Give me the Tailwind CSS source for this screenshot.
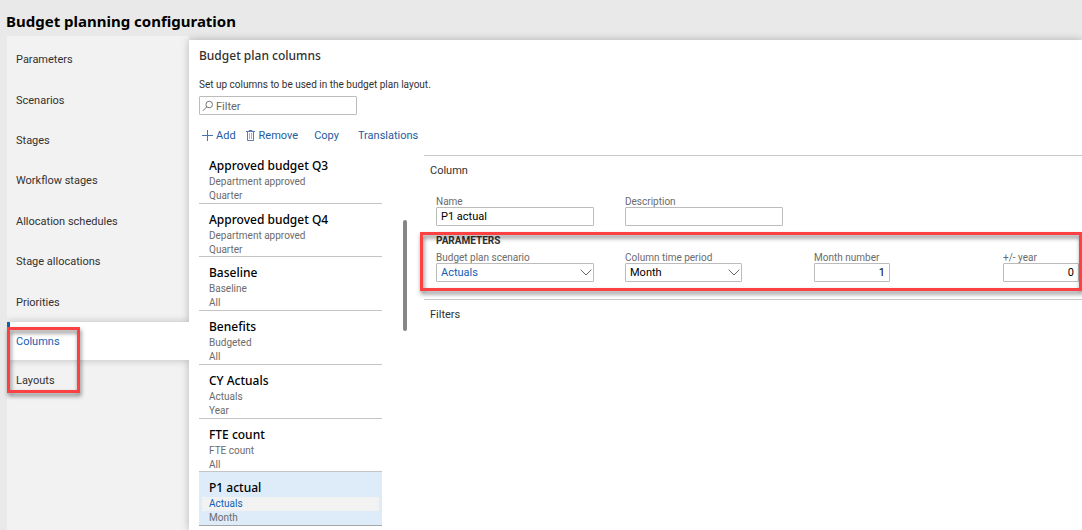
<!DOCTYPE html>
<html lang="en">
<head>
<meta charset="utf-8">
<meta name="viewport" content="width=device-width, initial-scale=1">
<title>Budget planning configuration</title>
<script src="https://cdn.jsdelivr.net/npm/@tailwindcss/browser@4"></script>
</head>
<body class="flex h-screen flex-col overflow-hidden bg-[#e9e9e9] font-['Roboto','Noto_Sans',sans-serif] text-[11px] leading-[14px] text-[#323130]">
<header class="flex h-9 shrink-0 items-center px-1.5 pt-1.5">
  <h1 class="font-['Noto_Sans',sans-serif] text-[15px] leading-5 font-bold text-black">Budget planning configuration</h1>
</header>
<div class="flex min-h-0 flex-1 pl-[7px]">
  <nav aria-label="Sections" class="flex w-[182px] shrink-0 flex-col bg-[#f2f2f2] pt-[3px]">
    <div class="flex h-[283px] flex-col">
      <a href="#" class="flex flex-1 items-center pt-0.5 pl-[9px]">Parameters</a>
      <a href="#" class="flex flex-1 items-center pt-0.5 pl-[9px]">Scenarios</a>
      <a href="#" class="flex flex-1 items-center pt-0.5 pl-[9px]">Stages</a>
      <a href="#" class="flex flex-1 items-center pt-0.5 pl-[9px]">Workflow stages</a>
      <a href="#" class="flex flex-1 items-center pt-0.5 pl-[9px]">Allocation schedules</a>
      <a href="#" class="flex flex-1 items-center pt-0.5 pl-[9px]">Stage allocations</a>
      <a href="#" class="flex flex-1 items-center pt-0.5 pl-[9px]">Priorities</a>
    </div>
    <div class="relative">
      <a href="#" aria-current="page" class="relative z-20 flex h-[38px] items-center border-l-3 border-[#0f63a8] bg-white pt-0.5 pl-1.5 text-[#1160b7] shadow-[0_0_8px_rgba(0,0,0,0.22)] [clip-path:inset(-10px_0_-10px_0)]">Columns</a>
      <a href="#" class="flex h-10 items-center pt-0.5 pl-[9px]">Layouts</a>
      <div class="pointer-events-none absolute top-[5px] left-0 z-30 h-[66px] w-[73px] border-3 border-[#fb4141] drop-shadow-[1px_3px_2px_rgba(0,0,0,0.5)]"></div>
    </div>
  </nav>
  <main class="relative z-10 mt-1 min-w-0 flex-1 bg-white pl-2.5 shadow-[0_0_8px_rgba(0,0,0,0.25)] [clip-path:inset(-12px_0_0_-12px)]">
    <h2 class="pt-1.5 font-['Noto_Sans',sans-serif] text-[12px] leading-5 font-medium">Budget plan columns</h2>
    <p class="pt-3 text-[10px]">Set up columns to be used in the budget plan layout.</p>
    <div class="mt-1 flex h-[19px] w-[158px] items-center gap-0.5 rounded-[1px] border border-[#bcbcbc] pl-0.5">
      <svg class="size-3 shrink-0" viewBox="0 0 12 12" fill="none" stroke="#777" stroke-width="1"><circle cx="7.2" cy="4.5" r="3.3"/><path d="M4.8 6.9 0.8 10.9"/></svg>
      <input type="text" aria-label="Filter columns" placeholder="Filter" class="h-[17px] w-full min-w-0 pt-px outline-none placeholder:text-[#666]">
    </div>
    <div class="mt-3 flex h-4 items-center text-[#1d5b9f]">
      <button type="button" class="flex items-center gap-[3px] pl-[3px]"><svg class="size-[11px]" viewBox="0 0 11 11" fill="none" stroke="#4a73b0"><path d="M5.500 0V11M0 5.500H11"/></svg><span class="pt-0.5">Add</span></button>
      <button type="button" class="ml-2.5 flex items-center gap-1"><svg class="h-[11px] w-[9px]" viewBox="0 0 9 11" fill="none" stroke="#5d7bb0"><path d="M0 1.500H9M3 1.500V.5H6V1.500M1.500 2V10.500H7.500V2"/><path stroke-opacity=".6" d="M3.500 3V9M5.500 3V9"/></svg><span class="pt-0.5">Remove</span></button>
      <button type="button" class="ml-4 pt-0.5">Copy</button>
      <button type="button" class="ml-[19px] pt-0.5">Translations</button>
    </div>
    <div class="flex pt-[7px]">
      <div class="flex h-[376px] w-[183px] shrink-0 flex-col text-[10px] text-[#6b6b6b]">
        <button type="button" class="flex min-h-0 flex-1 flex-col items-start border-b border-[#c4c4c4] pt-[7px] pl-2.5"><span class="font-['Noto_Sans',sans-serif] text-[12px] leading-[18px] font-medium text-black">Approved budget Q3</span><span>Department approved</span><span>Quarter</span></button>
        <button type="button" class="flex min-h-0 flex-1 flex-col items-start border-b border-[#c4c4c4] pt-[7px] pl-2.5"><span class="font-['Noto_Sans',sans-serif] text-[12px] leading-[18px] font-medium text-black">Approved budget Q4</span><span>Department approved</span><span>Quarter</span></button>
        <button type="button" class="flex min-h-0 flex-1 flex-col items-start border-b border-[#c4c4c4] pt-[7px] pl-2.5"><span class="font-['Noto_Sans',sans-serif] text-[12px] leading-[18px] font-medium text-black">Baseline</span><span>Baseline</span><span>All</span></button>
        <button type="button" class="flex min-h-0 flex-1 flex-col items-start border-b border-[#c4c4c4] pt-[7px] pl-2.5"><span class="font-['Noto_Sans',sans-serif] text-[12px] leading-[18px] font-medium text-black">Benefits</span><span>Budgeted</span><span>All</span></button>
        <button type="button" class="flex min-h-0 flex-1 flex-col items-start border-b border-[#c4c4c4] pt-[7px] pl-2.5"><span class="font-['Noto_Sans',sans-serif] text-[12px] leading-[18px] font-medium text-black">CY Actuals</span><span>Actuals</span><span>Year</span></button>
        <button type="button" class="flex min-h-0 flex-1 flex-col items-start border-b border-[#c4c4c4] pt-[7px] pl-2.5"><span class="font-['Noto_Sans',sans-serif] text-[12px] leading-[18px] font-medium text-black">FTE count</span><span>FTE count</span><span>All</span></button>
        <button type="button" aria-pressed="true" class="flex min-h-0 flex-1 flex-col items-start border-b border-[#a6a6a6] bg-[#deebf8] px-[3px] pt-[7px]"><span class="pl-[7px] font-['Noto_Sans',sans-serif] text-[12px] leading-[18px] font-medium text-black">P1 actual</span><span class="w-full bg-[#f2f2f2] pl-[7px] text-left text-[#1160b7]">Actuals</span><span class="pl-[7px]">Month</span></button>
      </div>
      <div class="mt-[70px] ml-[21px] h-[111px] w-1 shrink-0 rounded-sm bg-[#868686]"></div>
      <div class="mt-[5px] ml-[17px] min-w-0 flex-1">
        <section class="border-t border-[#c8c8c8] pl-1.5">
          <h3 class="pt-[7px] leading-4">Column</h3>
          <div class="grid grid-cols-[repeat(3,189px)_1fr] pt-4 pl-1.5">
            <div class="flex flex-col items-start">
              <label for="name" class="h-3 text-[10px] leading-[14px] text-[#6b6b6b]">Name</label>
              <input id="name" type="text" value="P1 actual" class="h-[19px] w-[158px] rounded-[1px] border border-[#bcbcbc] px-1 text-black">
            </div>
            <div class="flex flex-col items-start">
              <label for="description" class="h-3 text-[10px] leading-[14px] text-[#6b6b6b]">Description</label>
              <input id="description" type="text" class="h-[19px] w-[158px] rounded-[1px] border border-[#bcbcbc] px-1 text-black">
            </div>
          </div>
          <div class="relative mt-[7px] h-[66px] pl-1.5">
            <h4 class="pt-px text-[10px] font-bold">PARAMETERS</h4>
            <div class="grid grid-cols-[repeat(3,189px)_1fr] pt-[3px]">
              <div class="flex flex-col items-start">
                <label for="scenario" class="h-3 text-[10px] leading-[14px] text-[#6b6b6b]">Budget plan scenario</label>
                <div class="relative"><select id="scenario" class="block h-[19px] w-[158px] appearance-none rounded-[1px] border border-[#bcbcbc] px-1 text-[#1160b7]"><option>Actuals</option></select>
                <svg class="pointer-events-none absolute top-1.5 right-0.5 h-[7px] w-3" viewBox="0 0 12 7" fill="none" stroke="#666"><path d="M.7.700 6 6 11.300.700"/></svg></div>
              </div>
              <div class="flex flex-col items-start">
                <label for="period" class="h-3 text-[10px] leading-[14px] text-[#6b6b6b]">Column time period</label>
                <div class="relative"><select id="period" class="block h-[19px] w-[117px] appearance-none rounded-[1px] border border-[#bcbcbc] px-1 text-black"><option>Month</option></select>
                <svg class="pointer-events-none absolute top-1.5 right-0.5 h-[7px] w-3" viewBox="0 0 12 7" fill="none" stroke="#666"><path d="M.7.700 6 6 11.300.700"/></svg></div>
              </div>
              <div class="flex flex-col items-start">
                <label for="month" class="h-3 text-[10px] leading-[14px] text-[#6b6b6b]">Month number</label>
                <input id="month" type="text" value="1" class="h-[19px] w-[76px] rounded-[1px] border border-[#bcbcbc] px-1 text-right text-black">
              </div>
              <div class="flex flex-col items-start">
                <label for="year" class="h-3 text-[10px] leading-[14px] text-[#6b6b6b]">+/- year</label>
                <input id="year" type="text" value="0" class="h-[19px] w-[76px] rounded-[1px] border border-[#bcbcbc] px-1 text-right text-black">
              </div>
            </div>
            <div class="pointer-events-none absolute -top-px right-0 -left-2.5 h-[59px] border-3 border-[#fb4141] drop-shadow-[1px_3px_2px_rgba(0,0,0,0.5)]"></div>
          </div>
        </section>
        <section class="border-t border-[#c8c8c8] pl-1.5">
          <h3 class="pt-[7px] leading-4">Filters</h3>
        </section>
      </div>
    </div>
  </main>
</div>
</body>
</html>
